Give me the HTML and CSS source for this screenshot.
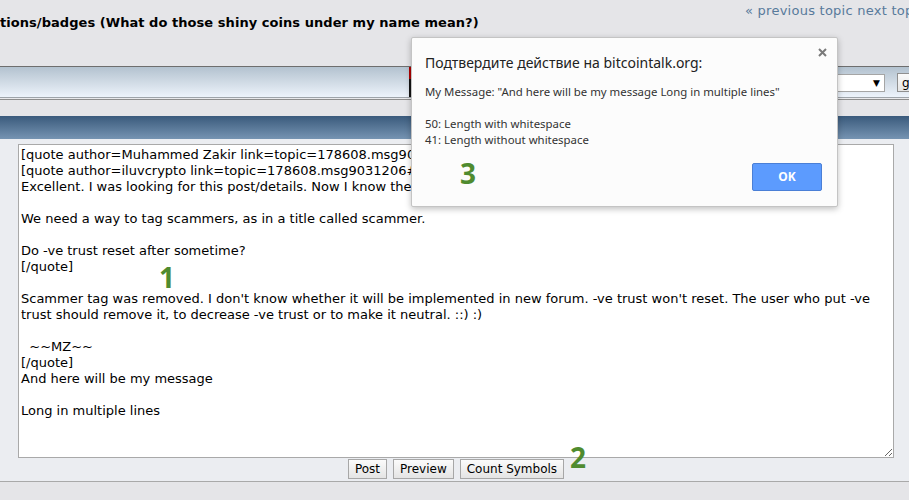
FILE: index.html
```html
<!DOCTYPE html>
<html lang="en">
<head>
<meta charset="utf-8">
<title>Count Symbols</title>
<link rel="stylesheet" href="styles.css">
</head>
<body>
<div class="page">
  <header class="top">
    <h1 class="title">tions/badges (What do those shiny coins under my name mean?)</h1>
    <nav class="topnav">« previous topic next topic »</nav>
  </header>
  <div class="bar-light">
    <span class="mark"></span>
    <div class="selectbox"><span class="arrow">▼</span></div>
    <button class="go">go</button>
  </div>
  <div class="bar-dark"></div>
  <form class="editor">
    <textarea class="msg">[quote author=Muhammed Zakir link=topic=178608.msg9031206#msg9031206 date=1416158471]
[quote author=iluvcrypto link=topic=178608.msg9031206#msg9031206 date=1416144000]
Excellent. I was looking for this post/details. Now I know the meaning of coins.

We need a way to tag scammers, as in a title called scammer.

Do -ve trust reset after sometime?
[/quote]

Scammer tag was removed. I don't know whether it will be implemented in new forum. -ve trust won't reset. The user who put -ve trust should remove it, to decrease -ve trust or to make it neutral. ::) :)

  ~~MZ~~
[/quote]
And here will be my message

Long in multiple lines</textarea>
    <div class="actions">
      <button type="button" class="btn">Post</button>
      <button type="button" class="btn">Preview</button>
      <button type="button" class="btn">Count Symbols</button>
    </div>
  </form>
</div>

<div class="dialog">
  <span class="close"><svg width="9" height="9" viewBox="0 0 9 9"><path d="M1 1L8 8M8 1L1 8" stroke="#7a7a7a" stroke-width="2" fill="none"/></svg></span>
  <p class="dlg-title">Подтвердите действие на bitcointalk.org:</p>
  <p class="dlg-msg">My Message: "And here will be my message Long in multiple lines"</p>
  <p class="dlg-counts">50: Length with whitespace<br>41: Length without whitespace</p>
  <div class="dlg-foot"><button type="button" class="ok">OK</button></div>
</div>

<span class="num n1">1</span>
<span class="num n2">2</span>
<span class="num n3">3</span>
</body>
</html>
```

FILE: styles.css
```css
html, body {
  margin: 0;
  padding: 0;
}
body {
  width: 909px;
  height: 500px;
  overflow: hidden;
  background: #e5e5e8;
  font-family: "DejaVu Sans", Verdana, sans-serif;
  position: relative;
}
.page {
  width: 909px;
}
.top {
  display: grid;
  grid-template-columns: 745px 164px;
  height: 66px;
  overflow: hidden;
}
.title {
  margin: 0;
  padding-top: 15px;
  font: bold 13px/16px "DejaVu Sans", sans-serif;
  letter-spacing: 0.05px;
  color: #000;
  white-space: nowrap;
}
.topnav {
  padding-top: 3px;
  font: 13px/16px "DejaVu Sans", sans-serif;
  letter-spacing: 0.25px;
  color: #587a9b;
  white-space: nowrap;
  overflow: hidden;
}
.bar-light {
  height: 30px;
  border-top: 1px solid #6e6e6e;
  border-bottom: 1px solid #9ea4aa;
  background: linear-gradient(#b3c2cf, #edf3fb);
  box-shadow: 0 1px 0 #e9e9ec, 0 2px 0 #8d8d8d;
  margin-bottom: 18px;
  display: flex;
  align-items: center;
  overflow: hidden;
}
.mark {
  flex: none;
  width: 2px;
  height: 30px;
  margin-left: 409px;
  background: linear-gradient(#b00000 0 40%, #151515 40%);
}
.selectbox {
  flex: none;
  box-sizing: border-box;
  margin-left: 304px;
  width: 170px;
  height: 18px;
  margin-top: 2px;
  border: 1px solid #a5a5a5;
  background: #fff;
  display: flex;
  justify-content: flex-end;
  align-items: center;
  padding-right: 4px;
}
.arrow {
  font-size: 9px;
  line-height: 10px;
  color: #000;
}
.go {
  flex: none;
  box-sizing: border-box;
  margin-left: 12px;
  width: 30px;
  height: 19px;
  margin-top: 1px;
  padding: 0 0 0 4px;
  text-align: left;
  border: 1px solid #8f8f8f;
  background: linear-gradient(#fafafa, #e6e6e6);
  font: 12px/16px "DejaVu Sans", sans-serif;
  color: #000;
}
.bar-dark {
  height: 23px;
  background: linear-gradient(#3a5a7c, #7694b2);
}
.editor {
  margin: 0;
  background: #ebedf1;
  padding: 5px 15px 2px 18px;
  border-bottom: 1px solid #a9a9a9;
}
.msg {
  display: block;
  box-sizing: border-box;
  width: 876px;
  height: 314px;
  margin: 0;
  padding: 2px;
  border: 1px solid #a9a9a9;
  background: #fff;
  color: #000;
  font: 13px/16px "DejaVu Sans", sans-serif;
  resize: both;
  outline: none;
}
.actions {
  display: flex;
  justify-content: center;
  gap: 6px;
  width: 876px;
  margin-top: 1px;
}
.btn {
  box-sizing: border-box;
  height: 20px;
  margin: 0;
  padding: 0 6px;
  border: 1px solid #a7a7a7;
  border-radius: 0;
  background: linear-gradient(#fbfbfb, #e4e4e4);
  color: #000;
  font: 12px/16px "DejaVu Sans", sans-serif;
}

.dialog {
  position: absolute;
  left: 411px;
  top: 37px;
  width: 427px;
  box-sizing: border-box;
  border: 1px solid #c4c4c4;
  border-radius: 2px;
  background: #fcfcfc;
  box-shadow: 0 2px 6px rgba(0, 0, 0, 0.25);
  padding: 15px 15px 15px 13px;
  font-family: "Noto Sans", "Open Sans", sans-serif;
  color: #333;
}
.close {
  position: absolute;
  top: 10px;
  right: 10px;
  width: 9px;
  height: 9px;
  display: block;
}
.close svg {
  display: block;
}
.dlg-title {
  margin: 0;
  font-size: 14px;
  line-height: 20px;
  color: #222;
}
.dlg-msg {
  margin: 11px 0 0;
  font-size: 11.4px;
  line-height: 16px;
}
.dlg-counts {
  margin: 16px 0 0;
  font-size: 11.4px;
  line-height: 16px;
}
.dlg-foot {
  display: flex;
  justify-content: flex-end;
  margin-top: 15px;
}
.ok {
  box-sizing: border-box;
  width: 70px;
  height: 28px;
  margin: 0;
  border: 1px solid #4a7fd6;
  border-radius: 2px;
  background: #5c9bfe;
  color: #fff;
  font: bold 12px/16px "Noto Sans", "Open Sans", sans-serif;
}

.num {
  position: absolute;
  font: bold 28px/20px "Open Sans", sans-serif;
  color: #4f8b2f;
}
.n1 { left: 159px; top: 267px; }
.n2 { left: 570px; top: 447px; }
.n3 { left: 460px; top: 163px; }
```
